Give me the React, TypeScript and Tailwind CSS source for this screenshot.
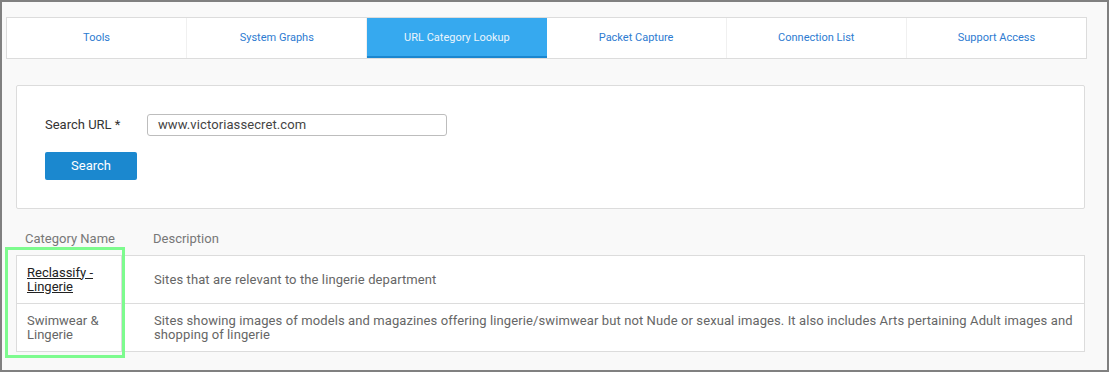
import React from 'react';

const tabs = ['Tools', 'System Graphs', 'URL Category Lookup', 'Packet Capture', 'Connection List', 'Support Access'];

const rows = [
  {
    name: 'Reclassify - Lingerie',
    link: true,
    desc: 'Sites that are relevant to the lingerie department',
  },
  {
    name: 'Swimwear & Lingerie',
    link: false,
    desc: 'Sites showing images of models and magazines offering lingerie/swimwear but not Nude or sexual images. It also includes Arts pertaining Adult images and shopping of lingerie',
  },
];

export default function App() {
  return (
    <div
      className="relative w-[1109px] h-[372px] bg-[#f9f9f9] border-2 border-[#808080] overflow-hidden text-[13px]"
      style={{ fontFamily: 'Roboto, "Liberation Sans", sans-serif' }}
    >
      {/* Tabs */}
      <div className="mt-[15px] ml-[4px] w-[1081px] h-[42px] flex bg-white border border-[#dcdcdc]">
        {tabs.map((t) => {
          const active = t === 'URL Category Lookup';
          return (
            <div
              key={t}
              className={
                active
                  ? 'flex-1 flex items-center justify-center bg-[#36a9ef] border-b-2 border-[#1a86cf] text-[#eaf5fd] text-[11px] pt-[2px]'
                  : 'flex-1 flex items-center justify-center border-r border-[#f0f0f0] last:border-r-0 text-[#2d7bd1] text-[11px]'
              }
            >
              {t}
            </div>
          );
        })}
      </div>

      {/* Search panel */}
      <div className="mt-[26px] ml-[14px] w-[1069px] h-[124px] bg-white border border-[#dcdcdc] rounded-[2px] pt-[28px] pl-[28px]">
        <div className="flex items-center h-[22px]">
          <span className="w-[102px] text-[#333]">Search URL *</span>
          <div className="w-[300px] h-[22px] border border-[#bdbdbd] rounded-[3px] flex items-center px-[10px] text-[#444] tracking-[0.1px]">
            www.victoriassecret.com
          </div>
        </div>
        <button className="mt-[16px] w-[92px] h-[28px] bg-[#1b88cf] rounded-[2px] text-white text-[13px] flex items-center justify-center">
          Search
        </button>
      </div>

      {/* Results */}
      <div className="ml-[14px] w-[1069px]">
        <div className="flex h-[46px] items-end pb-[7px] text-[#777]">
          <div className="w-[137px] pl-[9px]">Category Name</div>
          <div>Description</div>
        </div>
        <div className="bg-white border border-[#dcdcdc]">
          {rows.map((r, i) => (
            <div key={r.name} className={i > 0 ? 'flex h-[48px] border-t border-[#dcdcdc]' : 'flex h-[47px]'}>
              <div className="w-[105px] border-r border-[#dcdcdc] flex items-center pl-[10px] pr-[8px] leading-[14px]">
                {r.link ? (
                  <span className="text-[#222] underline">{r.name}</span>
                ) : (
                  <span className="text-[#666]">{r.name}</span>
                )}
              </div>
              <div className="flex-1 flex items-center pl-[32px] pr-[4px] leading-[14px] text-[#666] tracking-[0.1px]">
                {r.desc}
              </div>
            </div>
          ))}
        </div>
      </div>

      {/* Highlight box */}
      <div className="absolute left-[3px] top-[245px] w-[120px] h-[111px] border-[3px] border-[#7dfb8e]" />
    </div>
  );
}
